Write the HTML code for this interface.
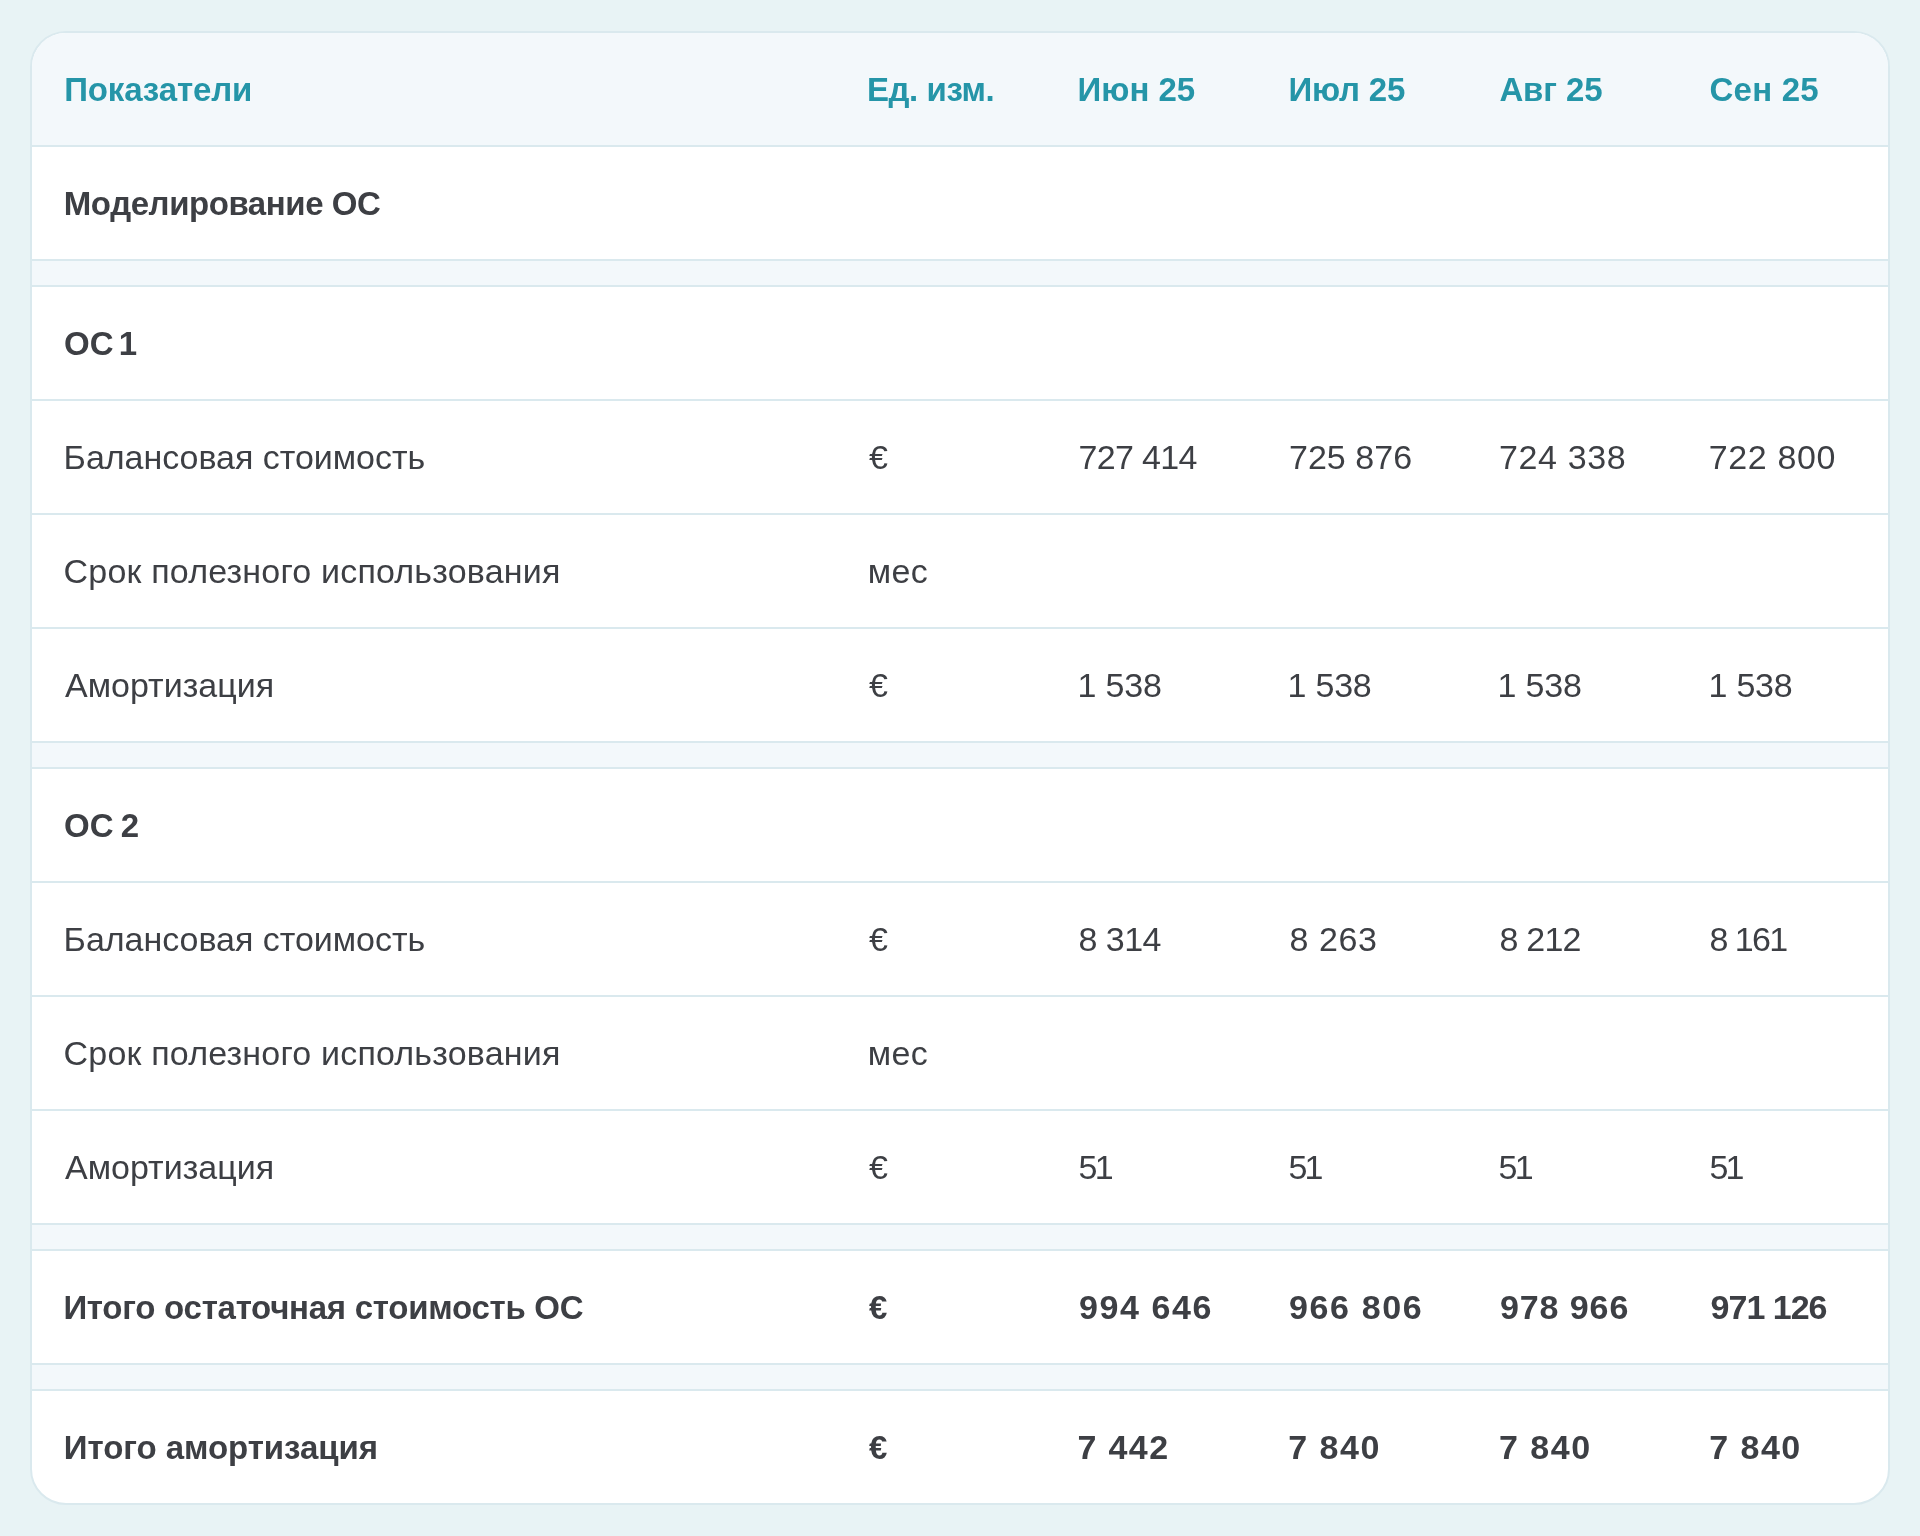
<!DOCTYPE html>
<html><head><meta charset="utf-8">
<style>
html,body{margin:0;padding:0;}
body{width:1920px;height:1536px;background:#e8f3f5;overflow:hidden;font-family:"Liberation Sans",sans-serif;position:relative;}
.card{position:absolute;left:30px;top:31px;width:1856px;height:1470px;border:2px solid #dae9ee;border-radius:36px;background:#fff;overflow:hidden;will-change:transform;}
table{border-collapse:collapse;table-layout:fixed;width:1856px;}
col.c1{width:804px;}
col.c{width:210.4px;}
td,th{padding:0 0 0 32px;text-align:left;white-space:nowrap;}
thead th{height:112px;background:#f3f8fb;color:#2595a8;font-weight:700;font-size:33px;border-bottom:2px solid #dae9ee;}
tbody td{height:112px;border-bottom:2px solid #dae9ee;color:#3d3f44;font-size:34px;}
tr.b td{font-weight:700;font-size:33px;}
tr.b td.n{font-size:34px;letter-spacing:1px;}
tr.sp td{height:24px;background:#f3f8fb;padding:0;}
tr.last td{border-bottom:none;}
td span,th span{position:relative;}
th span{top:1px;}
tr.b td:not(.n) span{top:1px;}
</style></head><body>
<div class="card">
<table>
<colgroup><col class="c1"><col class="c"><col class="c"><col class="c"><col class="c"><col class="c"></colgroup>
<thead><tr><th><span style="letter-spacing:-0.13px;left:0.20px">Показатели</span></th><th><span style="letter-spacing:-0.43px;left:-1.00px">Ед. изм.</span></th><th><span style="letter-spacing:-0.04px;left:-0.80px">Июн 25</span></th><th><span style="letter-spacing:-0.20px;left:-0.40px">Июл 25</span></th><th><span style="letter-spacing:-0.12px;left:0.20px">Авг 25</span></th><th><span style="letter-spacing:0.20px">Сен 25</span></th></tr></thead>
<tbody>
<tr class="b"><td><span style="letter-spacing:-0.43px;left:-0.20px">Моделирование ОС</span></td><td></td><td></td><td></td><td></td><td></td></tr>
<tr class="sp"><td colspan="6"></td></tr>
<tr class="b"><td><span style="word-spacing:-4.00px">ОС 1</span></td><td></td><td></td><td></td><td></td><td></td></tr>
<tr class="r"><td><span style="letter-spacing:-0.03px;left:-0.40px">Балансовая стоимость</span></td><td class="u"><span style="left:1.00px">€</span></td><td class="n"><span style="letter-spacing:-0.67px">727 414</span></td><td class="n"><span style="letter-spacing:0.03px;left:0.20px">725 876</span></td><td class="n"><span style="letter-spacing:0.63px;left:-0.20px">724 338</span></td><td class="n"><span style="letter-spacing:0.63px;left:-0.80px">722 800</span></td></tr>
<tr class="r"><td><span style="letter-spacing:0.19px;left:-0.40px">Срок полезного использования</span></td><td class="u"><span style="letter-spacing:0.30px;left:-0.20px">мес</span></td><td></td><td></td><td></td><td></td></tr>
<tr class="r"><td><span style="left:1.00px">Амортизация</span></td><td class="u"><span style="left:1.00px">€</span></td><td class="n"><span style="letter-spacing:-0.18px;left:-0.80px">1 538</span></td><td class="n"><span style="letter-spacing:-0.18px;left:-1.40px">1 538</span></td><td class="n"><span style="letter-spacing:-0.18px;left:-1.60px">1 538</span></td><td class="n"><span style="letter-spacing:-0.18px;left:-1.20px">1 538</span></td></tr>
<tr class="sp"><td colspan="6"></td></tr>
<tr class="b"><td><span style="word-spacing:-2.00px">ОС 2</span></td><td></td><td></td><td></td><td></td><td></td></tr>
<tr class="r"><td><span style="letter-spacing:-0.03px;left:-0.40px">Балансовая стоимость</span></td><td class="u"><span style="left:1.00px">€</span></td><td class="n"><span style="letter-spacing:-0.55px;left:0.20px">8 314</span></td><td class="n"><span style="letter-spacing:0.60px;left:0.60px">8 263</span></td><td class="n"><span style="letter-spacing:-0.80px;left:0.40px">8 212</span></td><td class="n"><span style="letter-spacing:-1.55px;left:-0.20px">8 161</span></td></tr>
<tr class="r"><td><span style="letter-spacing:0.19px;left:-0.40px">Срок полезного использования</span></td><td class="u"><span style="letter-spacing:0.30px;left:-0.20px">мес</span></td><td></td><td></td><td></td><td></td></tr>
<tr class="r"><td><span style="left:1.00px">Амортизация</span></td><td class="u"><span style="left:1.00px">€</span></td><td class="n"><span style="letter-spacing:-2.70px;left:0.20px">51</span></td><td class="n"><span style="letter-spacing:-2.70px;left:-0.40px">51</span></td><td class="n"><span style="letter-spacing:-2.70px;left:-0.60px">51</span></td><td class="n"><span style="letter-spacing:-2.70px;left:-0.20px">51</span></td></tr>
<tr class="sp"><td colspan="6"></td></tr>
<tr class="b"><td><span style="letter-spacing:-0.26px;left:-0.60px">Итого остаточная стоимость ОС</span></td><td class="u"><span style="left:1.00px">€</span></td><td class="n"><span style="letter-spacing:1.57px;left:0.60px">994 646</span></td><td class="n"><span style="letter-spacing:1.63px;left:0.20px">966 806</span></td><td class="n"><span style="letter-spacing:0.90px;left:0.80px">978 966</span></td><td class="n"><span style="letter-spacing:-1.00px;left:1.00px">971 126</span></td></tr>
<tr class="sp"><td colspan="6"></td></tr>
<tr class="b last"><td><span style="letter-spacing:-0.06px;left:-0.20px">Итого амортизация</span></td><td class="u"><span style="left:1.00px">€</span></td><td class="n"><span style="letter-spacing:1.40px;left:-1.00px">7 442</span></td><td class="n"><span style="letter-spacing:1.50px;left:-0.60px">7 840</span></td><td class="n"><span style="letter-spacing:1.50px;left:-0.20px">7 840</span></td><td class="n"><span style="letter-spacing:1.50px;left:-0.40px">7 840</span></td></tr>
</tbody>
</table>
</div>
</body></html>
